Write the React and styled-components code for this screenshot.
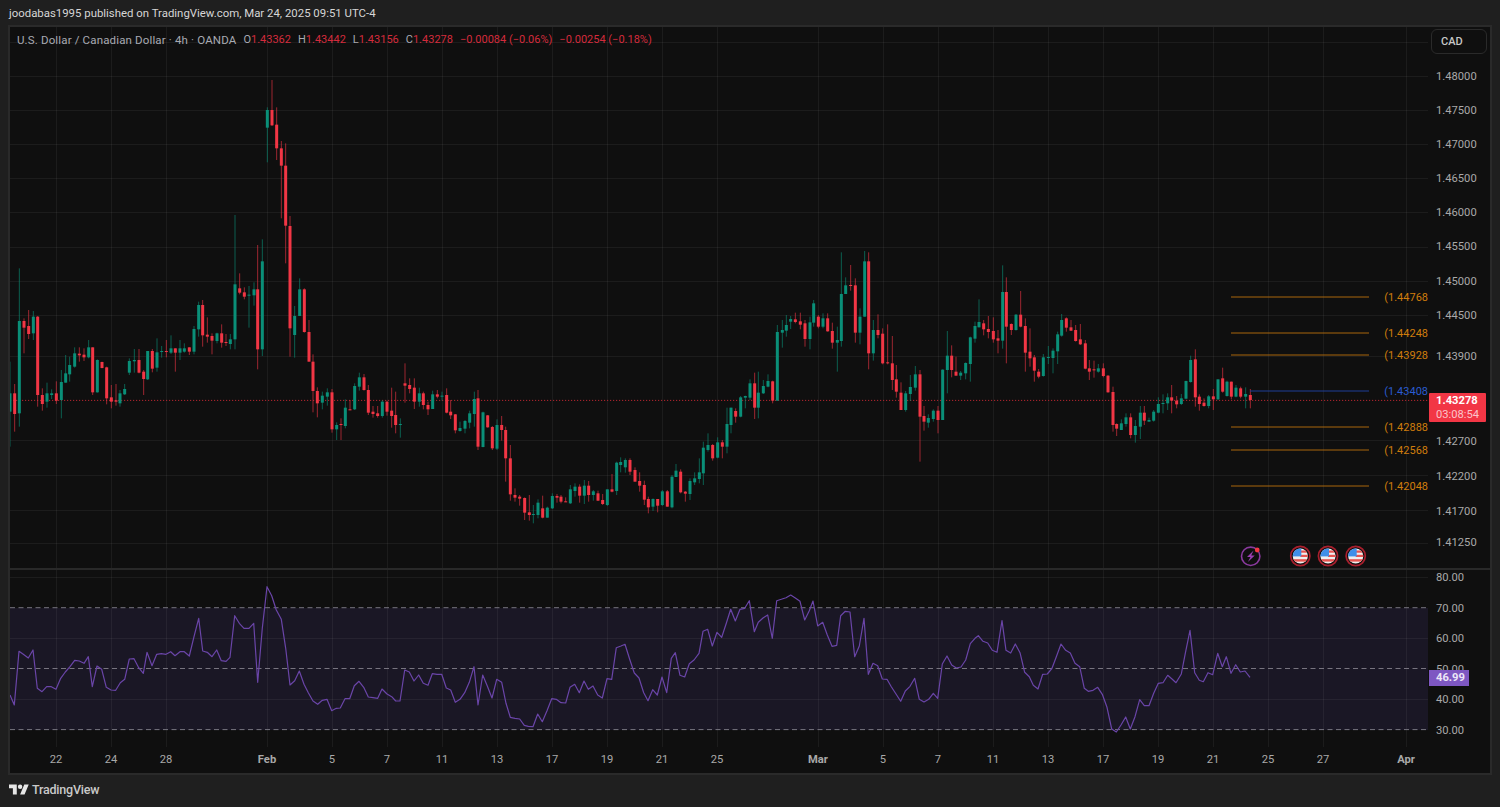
import styled, { createGlobalStyle } from "styled-components"

// candles read off the chart: [x, wickTop, bodyTop, bodyBottom, wickBottom, up]
// kept at 3x in three runs, each with its own origin
const runA = [
	[30,905,1000,1055,1160,1],[44,972,1000,1062,1115,0],[58,625,783,1060,1100,1],[72,775,783,803,880,0],[86,750,798,822,837,0],
	[100,753,770,820,840,1],[113,768,770,1005,1040,0],[127,985,1005,1032,1052,0],[141,968,1000,1025,1043,1],[155,988,1000,1005,1017,1],
	[169,964,1000,1022,1032,0],[184,930,966,1020,1075,1],[197,885,940,968,968,1],[209,890,915,943,965,1],[224,862,880,920,923,1],
	[238,862,881,886,905,0],[252,865,884,892,903,0],[266,840,862,892,895,1],[278,862,862,997,1005,0],[292,898,900,997,998,1],
	[306,905,906,924,925,0],[320,920,922,1015,1033,0],[334,975,1012,1025,1045,0],[348,972,1021,1025,1037,0],[360,990,1000,1030,1040,1],
	[374,972,987,1003,1005,1],[388,895,903,938,945,1],[403,867,900,904,938,1],[417,867,900,938,940,0],[431,930,935,957,1005,0],
	[443,873,873,958,960,1],[457,867,873,926,937,0],[471,835,877,923,935,1],[485,858,873,875,893,1],[499,840,873,876,892,0],
	[513,826,865,878,882,1],[526,865,865,878,935,0],[540,840,865,878,900,1],[553,850,865,875,878,1],[568,862,862,875,885,0],
	[582,798,807,875,883,1],[596,725,735,808,830,1],[608,720,735,826,860,0],[622,772,824,830,848,0],[636,820,828,842,883,0],
	[651,818,820,843,850,1],[665,793,820,848,863,0],[678,822,846,849,858,0],[691,822,838,852,868,1],[705,465,673,838,868,1],
	[719,640,685,698,703,0],[733,682,697,710,718,0],[747,678,704,706,803,1],[762,667,688,706,737,1],[773,555,688,868,928,0],
	[787,538,604,868,888,1],[802,142,150,203,307,1],[816,60,150,196,198,0],[830,142,194,265,300,0],[844,243,265,317,475,0],
	[857,250,317,497,610,0],[870,468,498,805,890,0],[884,738,768,825,893,1],[899,655,688,768,768,1],[913,685,688,816,818,0],
	[927,780,816,905,905,0],[939,883,905,993,1057,0],[952,982,993,1030,1072,0],[967,995,1007,1028,1048,1],[982,985,997,1010,1037,1],
	[996,987,997,1108,1118,0],[1010,1087,1095,1108,1140,1],
]

const runB = [
	[33,205,222,225,270,0],[46,148,173,228,235,1],[60,150,178,180,180,0],[74,100,108,178,180,1],[88,68,82,110,122,1],
	[102,72,82,120,122,0],[115,105,120,188,195,0],[129,168,185,192,203,0],[143,168,190,198,203,0],[157,150,155,198,203,1],
	[171,152,155,185,197,0],[185,113,182,198,233,0],[197,125,195,225,250,0],[211,205,222,224,263,1],[225,40,100,107,158,0],
	[239,85,105,117,130,0],[253,85,113,155,177,0],[268,113,130,155,170,1],[280,125,130,165,178,0],[294,155,165,178,195,0],
	[308,122,133,177,177,1],[322,120,133,140,145,0],[336,125,137,138,152,1],[350,115,135,188,190,0],[362,150,185,196,207,0],
	[376,192,193,241,250,0],[390,215,234,243,245,1],[405,210,213,236,250,1],[419,182,190,218,235,1],[433,125,147,192,230,1],
	[444,120,145,290,300,0],[459,185,187,291,292,1],[473,195,196,232,233,0],[487,228,231,295,300,0],[501,208,225,296,300,1],
	[515,198,225,240,272,0],[527,230,240,325,395,0],[541,285,325,433,452,0],[555,415,435,443,455,0],[569,435,440,446,467,0],
	[584,442,444,488,510,0],[598,435,487,495,512,0],[610,465,492,494,520,1],[624,448,458,495,505,1],[638,437,475,503,505,0],
	[652,470,473,503,503,1],[667,430,438,475,477,1],[681,432,438,443,458,0],[693,435,440,455,460,0],[707,442,454,456,456,0],
	[721,405,418,460,462,1],[735,400,410,423,440,1],[749,403,410,437,458,0],[763,390,407,437,462,1],[776,393,407,435,455,0],
	[790,420,424,435,452,1],[804,422,430,452,453,0],[818,432,450,462,465,0],[832,418,418,465,468,1],[846,372,418,425,427,0],
	[860,335,338,423,435,1],[872,322,336,345,367,1],[886,325,330,352,368,1],[900,325,330,365,375,0],[915,352,360,395,395,0],
	[929,367,393,407,425,0],[943,392,405,449,465,0],[955,440,447,472,490,0],[969,445,447,470,483,1],[983,447,447,467,487,0],
	[997,420,424,465,468,1],[1012,420,424,470,470,0],[1026,375,380,472,475,1],[1038,342,362,381,381,1],[1052,358,365,427,430,0],
	[1066,423,425,431,455,0],[1080,385,393,432,450,1],[1094,367,385,397,405,1],[1108,325,367,387,400,1],[1120,275,293,370,405,1],
	[1134,250,285,300,305,1],[1148,282,285,325,332,0],[1163,262,277,323,325,1],[1177,270,277,290,325,0],[1191,173,222,290,310,1],
]

const runC = [
	[33,503,503,555,580,1],[47,505,513,530,548,0],[62,468,472,530,532,1],[76,467,468,473,505,1],[90,418,430,473,480,1],
	[104,398,430,503,537,0],[115,395,458,503,535,1],[130,420,438,460,462,1],[144,403,423,440,442,1],[158,422,424,482,490,0],
	[172,255,276,482,482,1],[187,240,270,278,323,1],[199,225,255,272,290,1],[212,228,237,245,267,1],[226,218,238,246,250,0],
	[241,218,244,254,268,0],[255,240,250,297,320,0],[270,230,247,297,328,1],[281,180,190,248,260,1],[295,225,230,260,265,0],
	[309,220,235,260,265,1],[323,220,235,274,275,0],[337,248,273,308,326,0],[352,260,300,308,395,1],[364,37,162,303,320,1],
	[377,112,136,162,162,1],[392,75,135,138,152,0],[406,115,136,278,308,0],[420,205,230,278,313,1],[434,33,64,230,230,1],
	[446,37,64,340,388,0],[460,240,270,340,362,1],[474,223,270,285,295,0],[488,265,281,370,373,0],[503,253,367,370,373,0],
	[517,288,370,420,450,0],[529,375,418,455,473,0],[543,427,458,510,510,0],[557,453,460,510,515,1],[571,405,441,462,483,1],
	[586,378,403,443,452,1],[600,390,403,530,665,0],[612,498,528,545,572,0],[625,523,534,548,563,1],[640,508,512,537,545,1],
	[654,498,512,540,580,0],[668,388,389,540,540,1],[682,273,347,390,460,1],[695,316,347,390,412,0],[708,350,395,407,407,0],
	[722,393,398,407,420,1],[737,367,369,400,418,1],[751,290,292,372,425,1],[765,245,258,296,308,1],[777,178,246,262,262,1],
	[791,240,250,268,286,0],[805,228,267,276,295,0],[820,232,273,298,308,0],[834,270,295,302,340,0],[848,76,156,302,326,1],
	[859,112,156,260,370,0],[874,250,252,270,285,0],[888,222,224,270,272,1],[902,153,224,260,262,0],[916,235,258,338,395,0],
	[930,265,335,355,380,0],[943,345,352,392,425,0],[956,387,395,410,415,0],[970,342,352,408,410,1],[985,318,351,353,372,1],
	[999,325,332,354,400,1],[1013,275,283,334,372,1],[1025,222,240,287,290,1],[1039,232,235,263,275,0],[1053,240,262,272,273,0],
	[1067,255,270,303,305,0],[1081,252,298,313,315,0],[1096,300,310,386,388,0],[1108,360,385,395,420,0],[1122,362,388,391,413,0],
	[1135,372,385,395,398,1],[1150,370,385,408,412,0],[1164,405,407,457,458,0],[1179,440,456,555,575,0],[1190,550,552,566,588,0],
	[1204,538,550,570,570,1],[1218,520,532,552,560,1],[1232,520,532,585,595,0],[1246,540,558,585,608,1],[1261,498,518,560,597,1],
	[1273,498,518,542,555,0],[1287,533,540,545,545,1],[1301,510,515,542,545,1],[1315,472,492,518,520,1],[1329,463,489,491,520,1],
	[1343,460,472,490,510,1],[1355,435,472,482,520,0],[1370,468,482,493,505,0],[1384,462,475,492,495,1],[1398,422,423,476,478,1],
	[1412,347,360,426,428,1],[1426,328,358,472,500,0],[1438,463,470,492,512,0],[1452,475,488,498,500,0],[1466,465,469,498,505,1],
	[1480,447,469,478,510,0],[1494,418,418,478,480,1],[1508,383,415,455,458,0],[1521,422,425,468,470,1],[1534,425,425,470,478,0],
	[1548,435,443,470,472,1],[1562,440,445,470,475,0],[1577,442,462,470,505,1],[1591,447,465,480,505,0],
]

const candles = [
	...runA.map(c => place(c, 0, 60)),
	...runB.map(c => place(c, 330, 350)),
	...runC.map(c => place(c, 720, 240)),
]

function place([x, wt, bt, bb, wb, up], ox, oy) {
	return {
		x: ox + x / 3,
		wt: oy + wt / 3,
		bt: oy + bt / 3,
		bb: oy + bb / 3,
		wb: oy + wb / 3,
		up,
	}
}

const rsiA = [30,375,43,405,57,244,70,253,85,264,99,240,112,355,126,365,140,350,154,350,168,358,182,325,196,306,210,290,224,271,238,273,252,280,265,260,277,350,291,288,305,298,319,352,333,360,347,361,361,338,374,328,388,267,402,266,416,293,430,310,441,247,456,287,470,253,484,251,498,253,512,245,525,257,540,245,553,245,568,258,582,200,596,145,608,243,622,247,636,260,650,240,664,272,678,274,690,262,704,137,718,160,732,175,747,175,761,160,773,337,787,175,801,50,815,77,829,120,844,148,857,235,870,345,884,332,898,303,912,343,925,368,939,393,953,403,967,391,981,388,995,422,1009,415,1021,414,1035,386,1049,386,1063,347,1077,334,1091,352,1105,381,1119,383,1133,385,1146,357,1161,372,1175,380,1187,393,1200,393,1214,300,1228,306,1242,333,1256,315,1270,340,1284,346,1297,311,1311,313,1325,313,1339,354,1352,360,1366,397,1380,388,1394,368,1408,337,1422,290,1434,405,1448,315,1462,348,1476,384,1490,328]
const rsiB = [5,337,18,400,31,442,45,445,59,447,73,466,85,469,99,470,113,432,127,455,141,422,155,386,169,388,183,398,197,399,210,352,224,343,238,368,252,333,265,358,279,348,293,375,307,384,321,326,335,328,349,233,363,228,375,223,389,268,403,309,417,324,431,368,444,392,458,359,472,375,486,321,500,368,514,265,526,248,540,316,554,321,568,281,582,270,597,250,609,184,623,178,637,228,651,187,665,202,679,160,692,118,706,153,720,118,734,115,748,92,763,185,775,157,790,143,803,135,817,205,830,92,844,88,858,83,872,75,886,84,900,94,914,150,928,122,939,93,953,168,968,157,982,195,996,229,1010,226,1022,137,1036,124,1050,126,1064,260,1078,228,1092,145,1105,313,1119,280,1133,287,1147,327,1161,328,1174,350,1188,372,1202,394,1216,363,1230,349,1244,325,1258,388,1272,396,1286,388,1300,370,1313,385,1327,282,1341,258,1355,285,1369,294,1383,291,1397,270,1411,221,1425,205,1435,197,1449,214,1463,219,1477,241,1491,247]
const rsiC = [6,152,18,241,32,249,46,222,60,248,74,307,88,320,100,346,114,357,128,313,142,312,156,295,170,257,183,222,197,241,211,249,225,280,239,290,253,355,265,364,279,361,293,352,307,373,321,412,335,477,349,486,363,465,377,441,391,477,405,440,419,389,433,407,447,407,461,370,475,340,489,338,503,316,516,327,528,338,544,312,556,250,570,181,584,308,598,331,610,335,624,308,638,314,653,250,667,290,679,260,693,310,707,284,721,306,735,303,750,322]

function rsiPoints(run, ox) {
	const out = []
	for (let i = 0; i < run.length; i += 2) {
		out.push(`${(ox + run[i] / 3).toFixed(1)},${(570 + run[i + 1] / 3).toFixed(1)}`)
	}
	return out
}

const rsiLine = [...rsiPoints(rsiA, 0), ...rsiPoints(rsiB, 500), ...rsiPoints(rsiC, 1000)].join(" ")

const vGrid = [56, 111, 166, 267, 332, 387, 442, 497, 552, 607, 662, 717, 818, 883, 938, 993, 1048, 1103, 1158, 1213, 1268, 1323, 1406]
const hGrid = [42, 76, 110, 144, 178, 212, 247, 281, 315, 356, 440, 475, 510, 543]

const priceTicks = [
	["1.48000", 76], ["1.47500", 110], ["1.47000", 144], ["1.46500", 178], ["1.46000", 212], ["1.45500", 246], ["1.45000", 281],
	["1.44500", 315], ["1.43900", 356], ["1.42700", 441], ["1.42200", 476], ["1.41700", 511], ["1.41250", 542],
]
const rsiTicks = [["80.00", 577], ["70.00", 608], ["60.00", 638], ["50.00", 669], ["40.00", 699], ["30.00", 730]]

const timeTicks = [
	["22", 56], ["24", 111], ["28", 166], ["Feb", 267, true], ["5", 332], ["7", 387], ["11", 442], ["13", 497], ["17", 552], ["19", 607],
	["21", 662], ["25", 717], ["Mar", 818, true], ["5", 883], ["7", 938], ["11", 993], ["13", 1048], ["17", 1103], ["19", 1158],
	["21", 1213], ["25", 1268], ["27", 1323], ["Apr", 1406, true],
]

const levels = [
	["(1.44768", 297], ["(1.44248", 333], ["(1.43928", 355], ["(1.43408", 391, true], ["(1.42888", 427], ["(1.42568", 450], ["(1.42048", 486],
]

function FlagBadge({ cx }) {
	const id = `flag-${cx}`
	return (
		<g>
			<circle cx={cx} cy="556" r="9.6" fill="#0f0f0f" stroke="#a81f2d" strokeWidth="1.7" />
			<clipPath id={id}>
				<circle cx={cx} cy="556" r="7.6" />
			</clipPath>
			<g clipPath={`url(#${id})`}>
				<rect x={cx - 8} y="548" width="16" height="16" fill="#eeeeee" />
				<rect x={cx} y="550.5" width="8" height="2.2" fill="#e8534f" />
				<rect x={cx} y="554.8" width="8" height="2.2" fill="#e8534f" />
				<rect x={cx - 8} y="559.2" width="16" height="2.4" fill="#e8534f" />
				<rect x={cx - 8} y="548" width="9" height="8.4" fill="#3f8fe8" />
			</g>
		</g>
	)
}

export default function App() {
	return (
		<Page>
			<GlobalStyle />
			<TopLine>joodabas1995 published on TradingView.com, Mar 24, 2025 09:51 UTC-4</TopLine>
			<ChartFrame>
				<MainPane>
					<Plot width="1418" height="541" viewBox="10 27 1418 541">
						{hGrid.map(y => <GridLine key={y} x1="10" x2="1428" y1={y + 0.5} y2={y + 0.5} />)}
						{vGrid.map(x => <GridLine key={x} x1={x + 0.5} x2={x + 0.5} y1="27" y2="568" />)}
						<PriceLine x1="10" x2="1428" y1="400.4" y2="400.4" />
						{candles.map((c, i) => (
							<g key={i} fill={c.up ? "#0a8f78" : "#f23645"} stroke={c.up ? "#0a8f78" : "#f23645"}>
								<line x1={c.x} x2={c.x} y1={c.wt} y2={c.wb} strokeWidth="1" strokeOpacity="0.62" />
								<rect x={c.x - 1.5} y={c.bt} width="3" height={Math.max(c.bb - c.bt, 1)} stroke="none" />
							</g>
						))}
						{levels.map(([label, y, blue]) => (
							<line
								key={label}
								x1={blue ? 1250 : 1231}
								x2="1369"
								y1={y}
								y2={y}
								stroke={blue ? "#1f3f98" : "#a9670c"}
								strokeWidth="1"
							/>
						))}
						<circle cx="1250.7" cy="556.3" r="9.2" fill="none" stroke="#8a3a9e" strokeWidth="1.6" />
						<path d="M1253.6 550.5l-6.6 6.6h3.5l-2.6 5 6.8-6.6h-3.5z" fill="#9c3fb4" />
						<circle cx="1257.2" cy="550" r="2.4" fill="#f23645" />
						<FlagBadge cx={1300.3} />
						<FlagBadge cx={1328} />
						<FlagBadge cx={1355.7} />
					</Plot>
					<Legend>
						<LegendName>U.S. Dollar / Canadian Dollar · 4h · OANDA</LegendName>
						<LegendPair>O<b>1.43362</b></LegendPair>
						<LegendPair>H<b>1.43442</b></LegendPair>
						<LegendPair>L<b>1.43156</b></LegendPair>
						<LegendPair>C<b>1.43278</b></LegendPair>
						<LegendPair><b>−0.00084 (−0.06%)</b></LegendPair>
						<LegendPair><b>−0.00254 (−0.18%)</b></LegendPair>
					</Legend>
					{levels.map(([label, y, blue]) => (
						<LevelLabel key={label} $y={y - 27} $blue={blue}>{label}</LevelLabel>
					))}
					<PriceAxis>
						<CurrencyButton>CAD</CurrencyButton>
						{priceTicks.map(([label, y]) => <AxisTick key={label} $y={y - 27}>{label}</AxisTick>)}
						<PriceTag>
							<strong>1.43278</strong>
							<span>03:08:54</span>
						</PriceTag>
					</PriceAxis>
				</MainPane>
				<PaneDivider />
				<RsiPane>
					<Plot width="1418" height="177" viewBox="10 570 1418 177">
						<rect x="10" y="608" width="1418" height="122" fill="#1a1725" />
						{[577, 638, 699].map(y => <GridLine key={y} x1="10" x2="1428" y1={y + 0.5} y2={y + 0.5} />)}
						{vGrid.map(x => <GridLine key={x} x1={x + 0.5} x2={x + 0.5} y1="570" y2="747" />)}
						{[607.7, 668.5, 729.6].map(y => <BandLine key={y} x1="10" x2="1428" y1={y} y2={y} />)}
						<RsiLine points={rsiLine} />
					</Plot>
					<RsiAxis>
						{rsiTicks.map(([label, y]) => <AxisTick key={label} $y={y - 570}>{label}</AxisTick>)}
						<RsiTag>46.99</RsiTag>
					</RsiAxis>
				</RsiPane>
				<TimeAxis>
					{timeTicks.map(([label, x, strong]) => (
						<TimeTick key={label + x} $x={x - 10} $strong={strong}>{label}</TimeTick>
					))}
				</TimeAxis>
			</ChartFrame>
			<Footer>
				<svg width="20" height="16" viewBox="0 0 36 28" fill="#e6e6e6">
					<path d="M14 22H7V11H0V4h14v18zM28 22h-8l7.5-18h8L28 22z" />
					<circle cx="20" cy="8" r="4" />
				</svg>
				<Brand>TradingView</Brand>
			</Footer>
		</Page>
	)
}

const font = `"Roboto", "Liberation Sans", sans-serif`

const GlobalStyle = createGlobalStyle`
*{
  padding: 0;
  margin: 0;
  box-sizing: border-box;
}

body {
  background: #1f1f1f;
  font-family: ${font};
  overflow: hidden;
}
`

const Page = styled.div`
	width: 1500px;
	height: 807px;
	background: #1f1f1f;
	display: flex;
	flex-direction: column;
`

const TopLine = styled.div`
	height: 25px;
	padding: 0 0 0 9px;
	line-height: 26px;
	font-size: 11.4px;
	color: #d6d6d6;
`

const ChartFrame = styled.div`
	margin: 0 8px;
	height: 750px;
	border: 2px solid #2a2a2a;
	background: #0f0f0f;
	display: flex;
	flex-direction: column;
`

const MainPane = styled.div`
	position: relative;
	display: flex;
	height: 541px;
`

const PaneDivider = styled.div`
	height: 2px;
	flex: none;
	background: #292929;
`

const Plot = styled.svg`
	display: block;
	flex: none;
`

const GridLine = styled.line`
	stroke: #ffffff;
	stroke-opacity: 0.055;
	stroke-width: 1;
`

const PriceLine = styled.line`
	stroke: #b3262f;
	stroke-width: 1;
	stroke-dasharray: 1.2 1.8;
`

const BandLine = styled.line`
	stroke: #77747f;
	stroke-width: 1;
	stroke-dasharray: 5 3.5;
`

const RsiLine = styled.polyline`
	fill: none;
	stroke: #6a45a8;
	stroke-width: 1.2;
	stroke-linejoin: round;
`

const Legend = styled.div`
	position: absolute;
	left: 7px;
	top: 6px;
	display: flex;
	gap: 7px;
	font-size: 11px;
	line-height: 14px;
	color: #a8aab2;
`

const LegendName = styled.span`
	font-size: 11.5px;
	letter-spacing: 0.15px;
	color: #a8aab2;
`

const LegendPair = styled.span`
	b {
		font-weight: 400;
		color: #d42b3c;
	}
`

const LevelLabel = styled.div`
	position: absolute;
	right: 62px;
	top: ${p => p.$y}px;
	transform: translateY(-50%);
	font-size: 11px;
	color: ${p => (p.$blue ? "#2a5bd0" : "#cf7d0c")};
`

const PriceAxis = styled.div`
	position: relative;
	width: 62px;
	flex: none;
`

const AxisTick = styled.div`
	position: absolute;
	left: 8px;
	top: ${p => p.$y}px;
	transform: translateY(-50%);
	font-size: 11.2px;
	color: #a9a9a9;
`

const CurrencyButton = styled.div`
	position: absolute;
	left: 3px;
	top: 2px;
	width: 56px;
	height: 25px;
	padding-left: 9px;
	border: 1px solid #2a2a2a;
	border-radius: 6px;
	line-height: 24px;
	font-size: 11px;
	font-weight: 500;
	color: #c8c8c8;
	background: #0f0f0f;
`

const PriceTag = styled.div`
	position: absolute;
	left: 1px;
	top: 366px;
	width: 57px;
	height: 29px;
	padding-left: 7px;
	background: #f23645;
	border-radius: 1px;
	display: flex;
	flex-direction: column;
	justify-content: center;
	font-size: 11.2px;
	line-height: 14px;
	strong {
		color: #fff;
		font-weight: 700;
	}
	span {
		color: #fbc4ca;
	}
`

const RsiPane = styled.div`
	display: flex;
	height: 177px;
`

const RsiAxis = styled.div`
	position: relative;
	width: 62px;
	flex: none;
`

const RsiTag = styled.div`
	position: absolute;
	left: 1px;
	top: 100px;
	width: 40px;
	height: 16px;
	padding-left: 7px;
	background: #7e57c2;
	line-height: 16px;
	font-size: 11.2px;
	font-weight: 700;
	color: #ece6f7;
`

const TimeAxis = styled.div`
	position: relative;
	height: 26px;
	flex: none;
`

const TimeTick = styled.div`
	position: absolute;
	left: ${p => p.$x}px;
	top: 6px;
	transform: translateX(-50%);
	font-size: 11.2px;
	font-weight: ${p => (p.$strong ? 700 : 400)};
	color: #a9a9a9;
`

const Footer = styled.div`
	flex: 1;
	display: flex;
	align-items: center;
	gap: 3px;
	padding: 0 0 3px 9px;
`

const Brand = styled.span`
	font-size: 12.5px;
	font-weight: 500;
	letter-spacing: -0.2px;
	color: #c9c9c9;
`
